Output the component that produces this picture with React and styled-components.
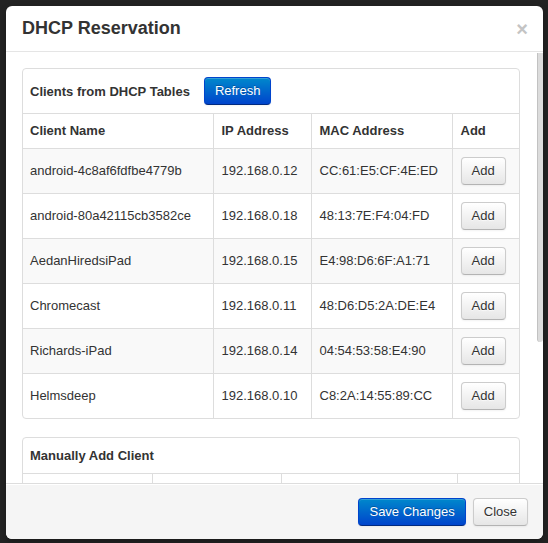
import React from 'react';
import styled, { createGlobalStyle } from 'styled-components';

const GlobalStyle = createGlobalStyle`
    html, body {
        margin: 0;
        padding: 0;
        background: #232323;
        height: 543px;
        overflow: hidden;
    }
    body {
        font-family: "Liberation Sans", Arial, sans-serif;
        font-size: 13px;
        color: #333;
    }
`

const Backdrop = styled.div`
    padding: 6px 5px 4px 6px;
`

const Modal = styled.div`
    position: relative;
    width: 537px;
    height: 533px;
    background: #fff;
    border-radius: 6px;
    overflow: hidden;
    display: flex;
    flex-direction: column;
    box-shadow: 0 3px 7px rgba(0, 0, 0, 0.3);
`

const Header = styled.div`
    display: flex;
    align-items: center;
    justify-content: space-between;
    padding: 9px 15px 9px 16px;
    border-bottom: 1px solid #e5e5e5;

    h3 {
        margin: 0;
        font-size: 18px;
        line-height: 27px;
        font-weight: bold;
        color: #333;
    }
`

const CloseX = styled.span`
    font-size: 20px;
    font-weight: bold;
    line-height: 20px;
    color: #c4c4c4;
    margin-top: 1px;
`

const Body = styled.div`
    flex: 1;
    overflow: hidden;
    padding: 16px 23px 0 16px;
`

const ScrollThumb = styled.div`
    position: absolute;
    top: 47px;
    right: 0;
    width: 5px;
    height: 289px;
    background: #dcdcdc;
    border-left: 1px solid #c2c2c2;
    border-radius: 0 0 3px 3px;
`

const Panel = styled.div`
    border: 1px solid #ddd;
    border-radius: 4px;
    margin-bottom: 18px;
    background: #fff;
`

const PanelHead = styled.div`
    display: flex;
    align-items: center;
    gap: 14px;
    padding: 8px 7px;
    border-bottom: 1px solid #ddd;
    font-weight: bold;
    line-height: 19px;
`

const Btn = styled.button`
    font-family: "Liberation Sans", Arial, sans-serif;
    font-size: 13px;
    line-height: 20px;
    padding: 3px 10px;
    border-radius: 4px;
    cursor: pointer;
    color: ${p => p.$primary ? '#fff' : '#333'};
    text-shadow: ${p => p.$primary ? '0 -1px 0 rgba(0,0,0,0.25)' : '0 1px 1px rgba(255,255,255,0.75)'};
    background: ${p => p.$primary
        ? 'linear-gradient(to bottom, #0088cc, #0044cc)'
        : 'linear-gradient(to bottom, #ffffff, #e6e6e6)'};
    border: 1px solid ${p => p.$primary ? '#0044cc' : '#cccccc'};
    border-bottom-color: ${p => p.$primary ? '#002a80' : '#b3b3b3'};
    box-shadow: inset 0 1px 0 rgba(255,255,255,0.2), 0 1px 2px rgba(0,0,0,0.05);
`

const Table = styled.table`
    width: 100%;
    border-collapse: collapse;
    table-layout: fixed;

    th, td {
        text-align: left;
        padding: 8px 8px;
        line-height: 18px;
        vertical-align: middle;
        border-left: 1px solid #ddd;
        border-top: 1px solid #ddd;
    }
    th:first-child, td:first-child {
        border-left: none;
        padding-left: 7px;
    }
    colgroup + * > tr:first-child > * {
        border-top: none;
    }
    th {
        font-weight: bold;
    }
    tbody tr:nth-child(odd) td {
        background: ${p => p.$striped ? '#f9f9f9' : '#fff'};
    }
`

const Footer = styled.div`
    display: flex;
    justify-content: flex-end;
    gap: 7px;
    padding: 14px 15px 15px;
    border-top: 1px solid #ddd;
    background: #f5f5f5;
    box-shadow: inset 0 1px 0 #fff;
    height: 56px;
    box-sizing: border-box;
    align-items: flex-start;
`

const clients = [
    { name: 'android-4c8af6fdfbe4779b', ip: '192.168.0.12', mac: 'CC:61:E5:CF:4E:ED' },
    { name: 'android-80a42115cb3582ce', ip: '192.168.0.18', mac: '48:13:7E:F4:04:FD' },
    { name: 'AedanHiredsiPad', ip: '192.168.0.15', mac: 'E4:98:D6:6F:A1:71' },
    { name: 'Chromecast', ip: '192.168.0.11', mac: '48:D6:D5:2A:DE:E4' },
    { name: 'Richards-iPad', ip: '192.168.0.14', mac: '04:54:53:58:E4:90' },
    { name: 'Helmsdeep', ip: '192.168.0.10', mac: 'C8:2A:14:55:89:CC' },
]

const App = () => {
    return (
        <Backdrop>
            <GlobalStyle />
            <Modal>
                <Header>
                    <h3>DHCP Reservation</h3>
                    <CloseX>×</CloseX>
                </Header>
                <Body>
                    <Panel>
                        <PanelHead>
                            <span>Clients from DHCP Tables</span>
                            <Btn $primary>Refresh</Btn>
                        </PanelHead>
                        <Table $striped>
                            <colgroup>
                                <col style={{ width: 190 }} />
                                <col style={{ width: 98 }} />
                                <col style={{ width: 141 }} />
                                <col />
                            </colgroup>
                            <thead>
                                <tr>
                                    <th>Client Name</th>
                                    <th>IP Address</th>
                                    <th>MAC Address</th>
                                    <th>Add</th>
                                </tr>
                            </thead>
                            <tbody>
                                {clients.map(c => (
                                    <tr key={c.mac}>
                                        <td>{c.name}</td>
                                        <td>{c.ip}</td>
                                        <td>{c.mac}</td>
                                        <td><Btn>Add</Btn></td>
                                    </tr>
                                ))}
                            </tbody>
                        </Table>
                    </Panel>
                    <Panel>
                        <PanelHead>
                            <span>Manually Add Client</span>
                        </PanelHead>
                        <Table>
                            <colgroup>
                                <col style={{ width: 129 }} />
                                <col style={{ width: 129 }} />
                                <col style={{ width: 176 }} />
                                <col />
                            </colgroup>
                            <tbody>
                                <tr>
                                    <td>&nbsp;</td>
                                    <td>&nbsp;</td>
                                    <td>&nbsp;</td>
                                    <td>&nbsp;</td>
                                </tr>
                            </tbody>
                        </Table>
                    </Panel>
                </Body>
                <ScrollThumb />
                <Footer>
                    <Btn $primary>Save Changes</Btn>
                    <Btn>Close</Btn>
                </Footer>
            </Modal>
        </Backdrop>
    )
}

export default App
